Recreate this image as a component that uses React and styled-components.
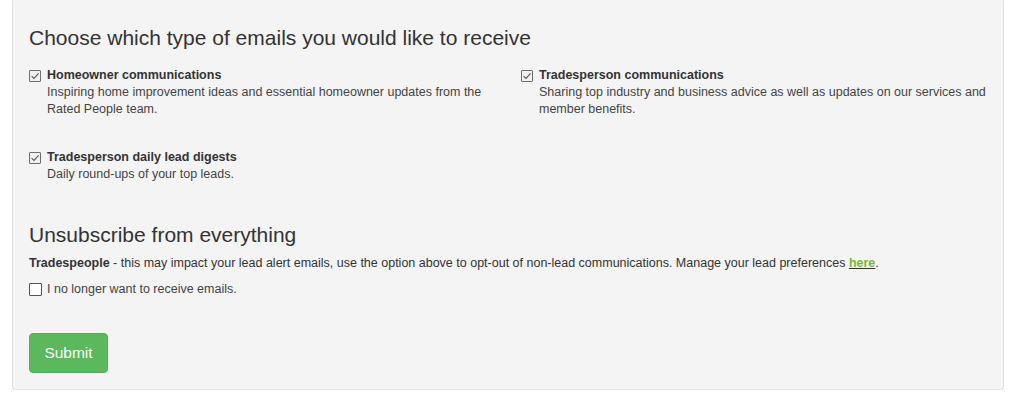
import React, { useState } from 'react';
import styled, { createGlobalStyle } from 'styled-components';

const GlobalStyle = createGlobalStyle`
  html, body {
    margin: 0;
    padding: 0;
    background: #fff;
    font-family: "Liberation Sans", Arial, sans-serif;
    color: #333;
  }
`;

const Page = styled.div`
  padding: 0 20px 0 12px;
`;

const Panel = styled.form`
  background: #f4f4f4;
  border: 1px solid #e0e0e0;
  border-top: none;
  border-radius: 0 0 4px 4px;
  box-shadow: 0 1px 1px rgba(0, 0, 0, 0.05);
  padding: 26px 16px 16px;
`;

const Heading = styled.h3`
  font-size: 21px;
  font-weight: normal;
  line-height: 23px;
  color: #333;
  margin: ${p => p.$first ? '0 0 18px' : '40px 0 9px'};
`;

const OptionGrid = styled.div`
  display: grid;
  grid-template-columns: 470px 470px;
  column-gap: 22px;
  row-gap: 31px;
`;

const Option = styled.div`
  display: grid;
  grid-template-columns: 12px 1fr;
  column-gap: 6px;
  font-size: 12.5px;
  line-height: 17px;
`;

const Box = styled.span`
  width: ${p => p.$size}px;
  height: ${p => p.$size}px;
  box-sizing: border-box;
  border: 1px solid ${p => p.$checked ? '#6e6e6e' : '#555'};
  background: ${p => p.$checked ? '#f0f0f0' : '#fff'};
  border-radius: 1px;
  display: flex;
  align-items: center;
  justify-content: center;
  align-self: center;
  cursor: pointer;
`;

const Label = styled.span`
  font-weight: bold;
  color: #333;
`;

const Desc = styled.span`
  grid-column: 2;
  color: #444;
`;

const Para = styled.p`
  font-size: 12.5px;
  line-height: 17px;
  margin: 0 0 9px;
  color: #333;

  b {
    font-weight: bold;
  }
`;

const HereLink = styled.a`
  color: #7ab929;
  font-weight: bold;
  text-decoration: underline;
  text-decoration-color: #333;
`;

const CheckRow = styled.div`
  display: flex;
  align-items: center;
  gap: 5px;
  font-size: 12.5px;
  line-height: 17px;
  color: #444;
`;

const SubmitButton = styled.button`
  margin-top: 35px;
  width: 79px;
  height: 40px;
  background: #5cb85c;
  border: 1px solid #55b155;
  border-radius: 4px;
  color: #fff;
  font-family: "Liberation Sans", Arial, sans-serif;
  font-size: 15.5px;
  padding: 0;
  cursor: pointer;
`;

const Checkbox = ({ checked, onToggle, size = 12 }) => (
  <Box $checked={checked} $size={size} role="checkbox" aria-checked={checked} onClick={onToggle}>
    {checked && (
      <svg width="10" height="10" viewBox="0 0 10 10">
        <path d="M1.6 5.1 L4 7.4 L8.6 2.4" fill="none" stroke="#5a5a5a" strokeWidth="1.1" />
      </svg>
    )}
  </Box>
);

const options = [
  {
    id: 'homeowner',
    label: 'Homeowner communications',
    desc: 'Inspiring home improvement ideas and essential homeowner updates from the Rated People team.',
  },
  {
    id: 'tradesperson',
    label: 'Tradesperson communications',
    desc: 'Sharing top industry and business advice as well as updates on our services and member benefits.',
  },
  {
    id: 'digests',
    label: 'Tradesperson daily lead digests',
    desc: 'Daily round-ups of your top leads.',
  },
];

const App = () => {
  const [prefs, setPrefs] = useState({ homeowner: true, tradesperson: true, digests: true });
  const [unsubscribe, setUnsubscribe] = useState(false);

  const toggle = id => setPrefs({ ...prefs, [id]: !prefs[id] });

  return (
    <Page>
      <GlobalStyle />
      <Panel onSubmit={e => e.preventDefault()}>
        <Heading $first>Choose which type of emails you would like to receive</Heading>
        <OptionGrid>
          {options.map(o => (
            <Option key={o.id}>
              <Checkbox checked={prefs[o.id]} onToggle={() => toggle(o.id)} />
              <Label>{o.label}</Label>
              <Desc>{o.desc}</Desc>
            </Option>
          ))}
        </OptionGrid>

        <Heading>Unsubscribe from everything</Heading>
        <Para>
          <b>Tradespeople</b> - this may impact your lead alert emails, use the option above to opt-out of non-lead communications. Manage your lead preferences <HereLink href="#">here</HereLink>.
        </Para>
        <CheckRow>
          <Checkbox size={13} checked={unsubscribe} onToggle={() => setUnsubscribe(!unsubscribe)} />
          I no longer want to receive emails.
        </CheckRow>

        <SubmitButton type="submit">Submit</SubmitButton>
      </Panel>
    </Page>
  );
};

export default App;
